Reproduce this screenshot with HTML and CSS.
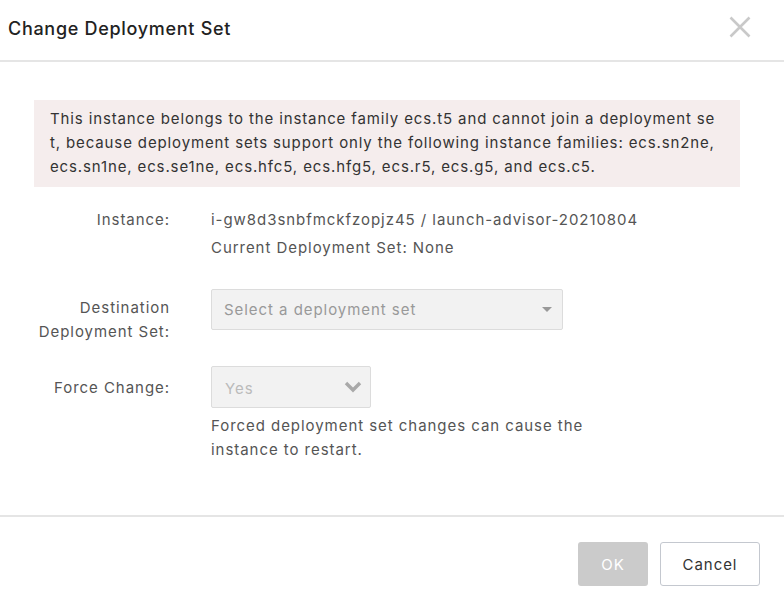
FILE: index.html
```html
<!DOCTYPE html>
<html>
<head>
<meta charset="utf-8">
<link rel="stylesheet" href="styles.css">
</head>
<body>
<div class="dialog">
  <div class="header">
    <div class="title">Change Deployment Set</div>
    <button class="close" aria-label="Close">
      <svg width="22" height="22" viewBox="0 0 22 22"><path d="M1.5 1.5 L20.5 20.5 M20.5 1.5 L1.5 20.5" stroke="#c9c9c9" stroke-width="2.6" fill="none"/></svg>
    </button>
  </div>
  <div class="body">
    <div class="alert">This instance belongs to the instance family ecs.t5 and cannot join a deployment se<br>t, because deployment sets support only the following instance families: ecs.sn2ne,<br>ecs.sn1ne, ecs.se1ne, ecs.hfc5, ecs.hfg5, ecs.r5, ecs.g5, and ecs.c5.</div>
    <div class="row row-instance">
      <div class="label">Instance:</div>
      <div class="value">
        <div>i-gw8d3snbfmckfzopjz45 / launch-advisor-20210804</div>
        <div>Current Deployment Set: None</div>
      </div>
    </div>
    <div class="row row-dest">
      <div class="label label-multi">Destination<br>Deployment Set:</div>
      <div class="value">
        <div class="select select-wide">
          <span class="placeholder">Select a deployment set</span>
          <span class="caret"></span>
        </div>
      </div>
    </div>
    <div class="row row-force">
      <div class="label label-force">Force Change:</div>
      <div class="value">
        <div class="select select-small">
          <span class="yes">Yes</span>
          <svg class="chev" width="18" height="12" viewBox="0 0 18 12"><path d="M2 2 L9 9 L16 2" stroke="#a9a9a9" stroke-width="3.4" fill="none"/></svg>
        </div>
        <div class="help">Forced deployment set changes can cause the<br>instance to restart.</div>
      </div>
    </div>
  </div>
  <div class="footer">
    <button class="btn btn-ok">OK</button>
    <button class="btn btn-cancel">Cancel</button>
  </div>
</div>
</body>
</html>
```
FILE: styles.css
```css
html, body {
  margin: 0;
  padding: 0;
  background: #fff;
}
body {
  font-family: Inter, "Liberation Sans", sans-serif;
  color: #333;
  letter-spacing: 0.95px;
}
.dialog {
  width: 784px;
  height: 596px;
  display: flex;
  flex-direction: column;
}
.header {
  height: 60px;
  border-bottom: 2px solid #e5e5e5;
  display: flex;
  align-items: center;
  justify-content: space-between;
  padding: 0 33px 0 8px;
}
.title {
  font-size: 18px;
  font-weight: 500;
  letter-spacing: 0.7px;
  color: #222;
  margin-top: -4px;
}
.close {
  border: 0;
  background: transparent;
  padding: 0;
  width: 22px;
  height: 22px;
  margin-top: -6px;
}
.body {
  padding: 38px 44px 0 34px;
  height: 455px;
  box-sizing: border-box;
  border-bottom: 2px solid #e5e5e5;
}
.alert {
  background: #f5eded;
  padding: 7px 16px 8px;
  font-size: 15px;
  line-height: 24px;
  letter-spacing: 0.87px;
  color: #333;
  white-space: nowrap;
}
.row {
  display: flex;
  gap: 41px;
}
.label {
  width: 136px;
  text-align: right;
  font-size: 15px;
  color: #555;
  flex-shrink: 0;
}
.value {
  font-size: 15px;
  color: #555;
}
.row-instance {
  margin-top: 19px;
  line-height: 28px;
}
.row-dest {
  margin-top: 27px;
}
.label-multi {
  line-height: 24px;
  padding-top: 7px;
}
.select {
  box-sizing: border-box;
  border: 1px solid #dcdcdc;
  background: #f2f2f2;
  border-radius: 2px;
  display: flex;
  align-items: center;
  justify-content: space-between;
}
.select-wide {
  width: 352px;
  height: 41px;
  padding: 0 10px 0 12px;
}
.placeholder {
  color: #999;
  font-size: 15px;
}
.caret {
  width: 0;
  height: 0;
  border-left: 5px solid transparent;
  border-right: 5px solid transparent;
  border-top: 5px solid #999;
}
.row-force {
  margin-top: 22px;
}
.label-force {
  line-height: 44px;
}
.select-small {
  width: 160px;
  height: 42px;
  padding: 0 8px 0 13px;
}
.yes {
  color: #bbb;
  font-size: 15px;
  margin-top: 2px;
}
.help {
  margin-top: 6px;
  line-height: 24px;
  color: #555;
}
.footer {
  flex: 1;
  display: flex;
  justify-content: flex-end;
  align-items: flex-start;
  gap: 12px;
  padding: 25px 24px 0 0;
}
.btn {
  height: 44px;
  border-radius: 3px;
  font-family: inherit;
  font-size: 15px;
  letter-spacing: 0.95px;
}
.btn-ok {
  width: 70px;
  background: #cbcbcb;
  border: 0;
  color: #fff;
}
.btn-cancel {
  width: 100px;
  background: #fff;
  border: 1px solid #c4c8cf;
  color: #333;
}
```
